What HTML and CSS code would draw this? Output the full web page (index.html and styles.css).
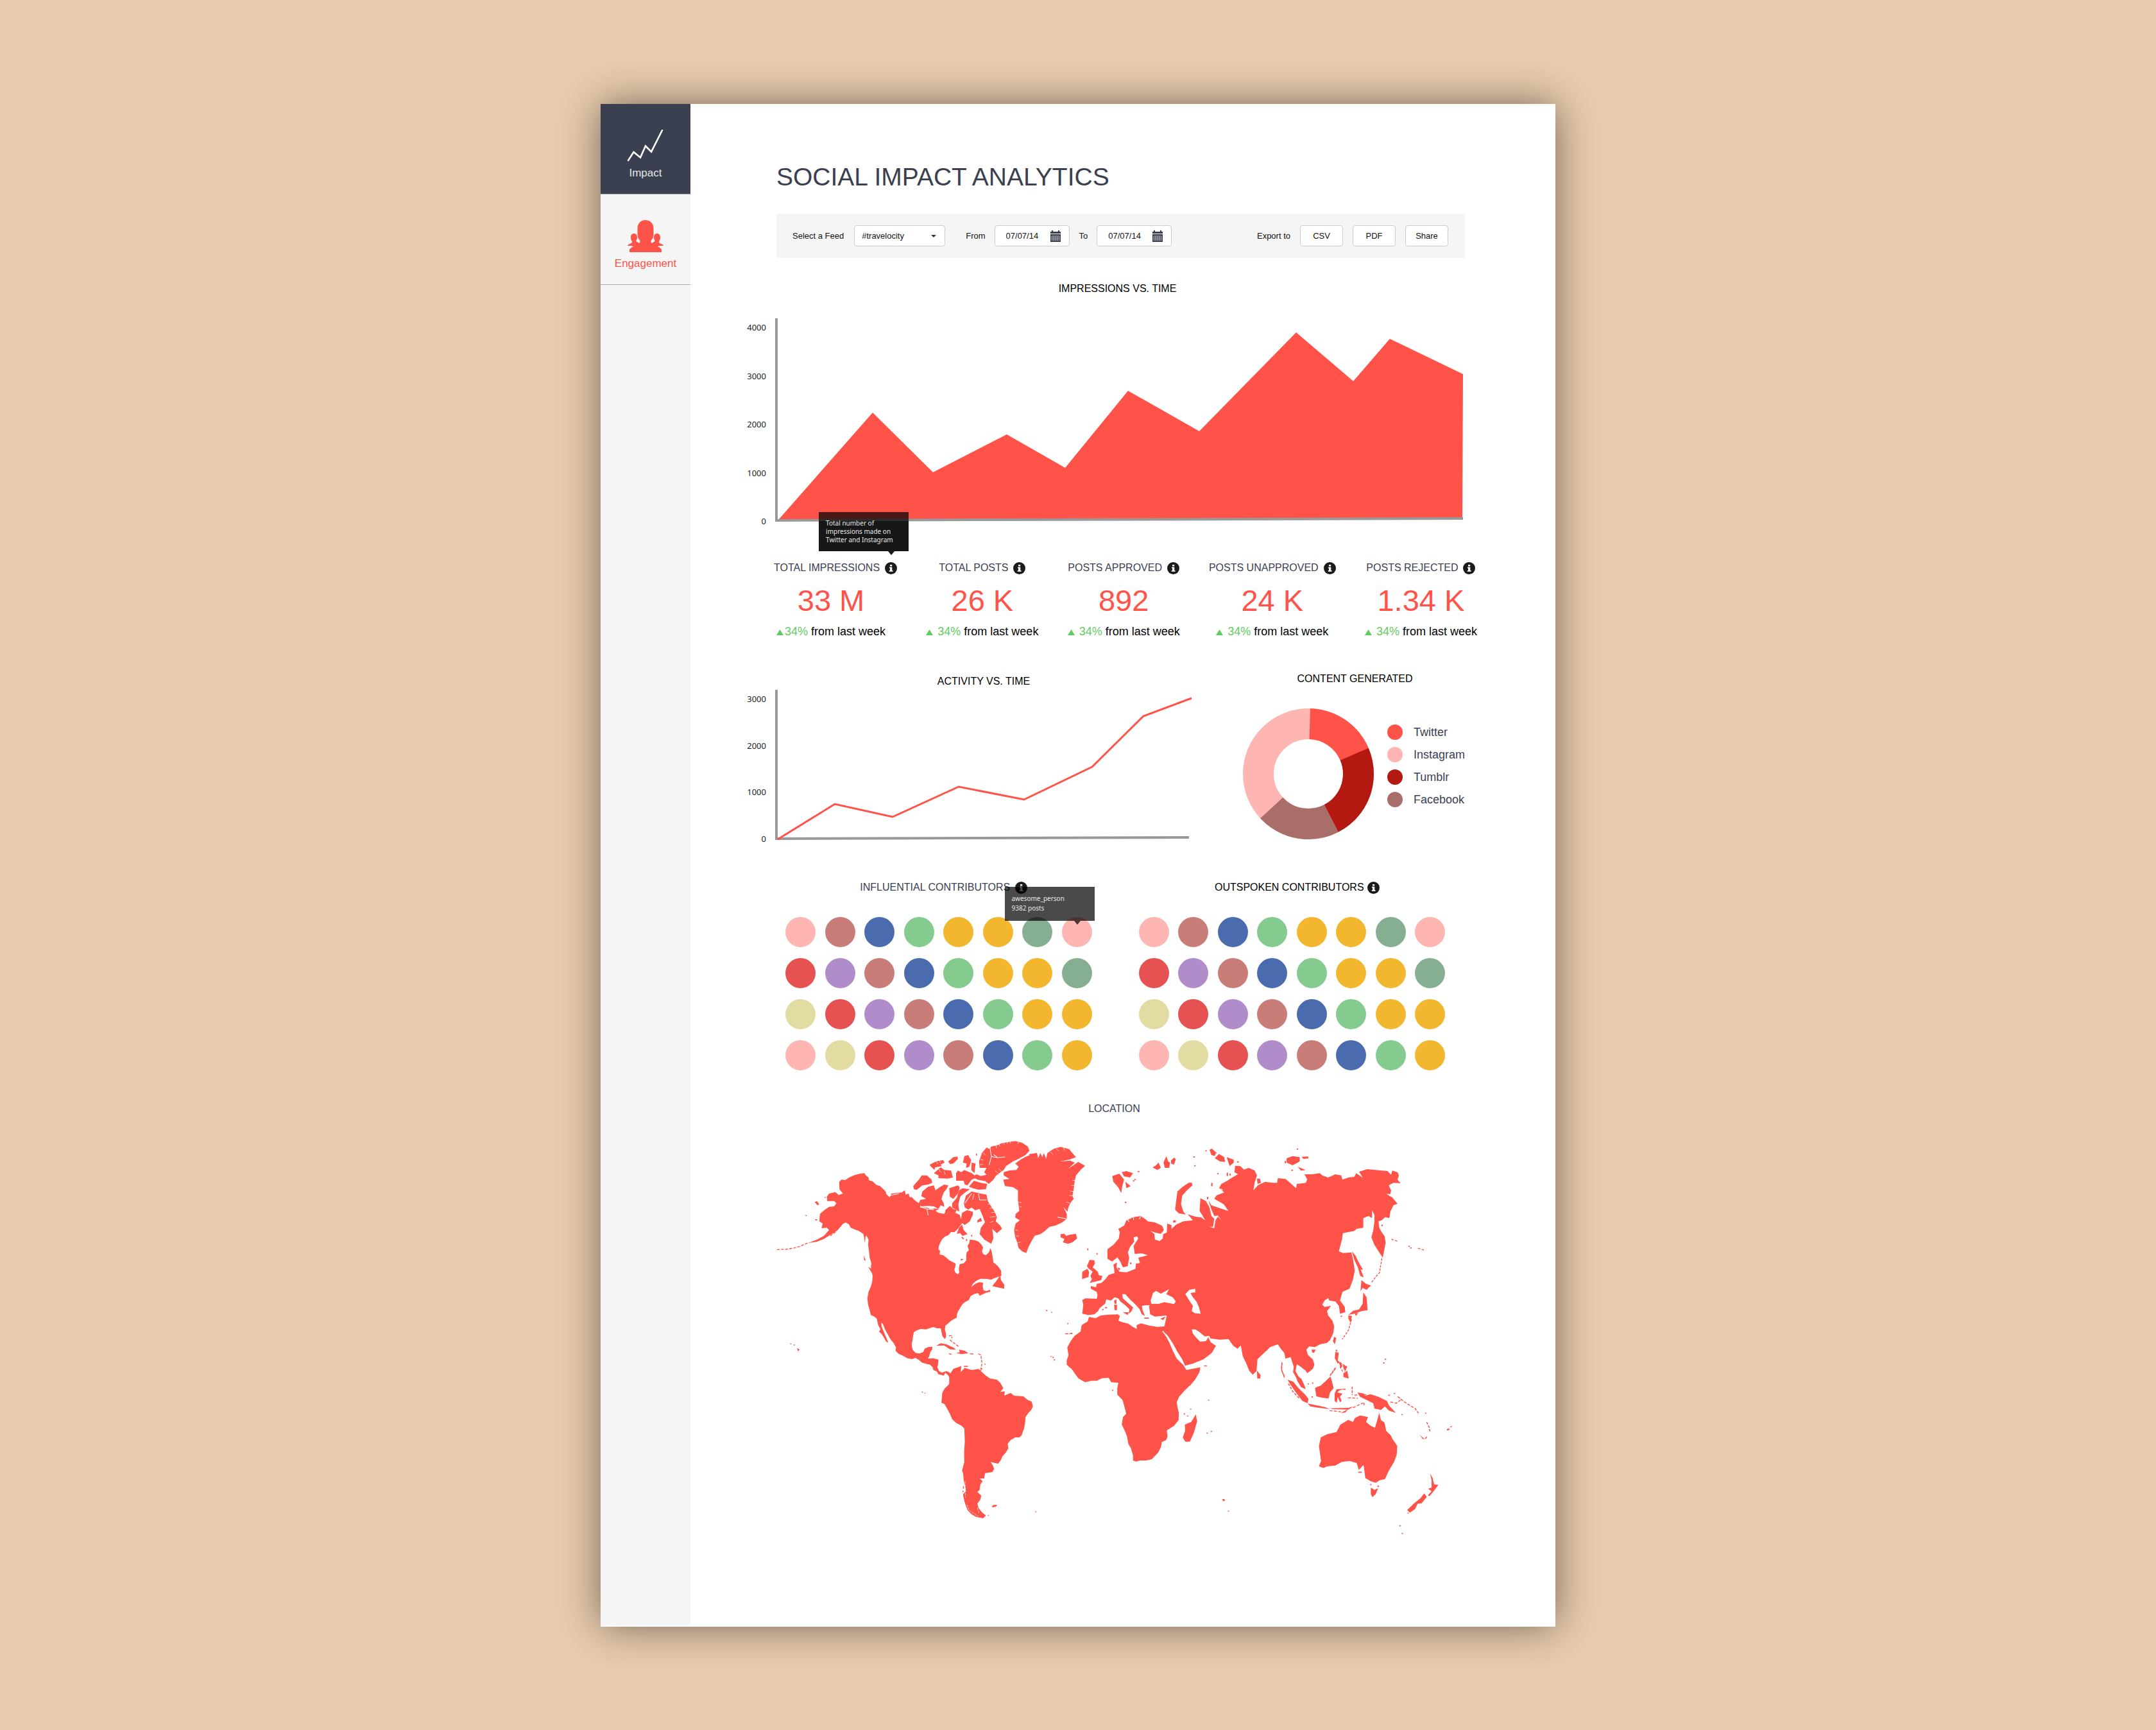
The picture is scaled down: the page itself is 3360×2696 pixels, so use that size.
FILE: index.html
```html
<!DOCTYPE html>
<html lang="en">
<head>
<meta charset="utf-8">
<meta name="viewport" content="width=device-width, initial-scale=1">
<title>Social Impact Analytics</title>
<link rel="stylesheet" href="styles.css">
</head>
<body>
<svg class="sprite" aria-hidden="true">
  <symbol id="info" viewBox="0 0 19 19"><circle cx="9.500" cy="9.500" r="9.500" fill="#1c1a1c"/><path d="M8 4h3.200v2.500H8zM7 7.800h4.300v5.200h1.200v1.700H6.800V13H8V9.500H7z" fill="#fff"/></symbol>
  <symbol id="up" viewBox="0 0 11 9"><path d="M5.500 0 11 9H0z" fill="#5fcc5f"/></symbol>
  <symbol id="calendar" viewBox="0 0 16 18"><path d="M0 2h2V0h2v2h8V0h2v2h2v3H0zM0 6h16v12H0z" fill="#3b4051"/><path d="M2 9h12M2 12h12M2 15h12M2 9v6.500M5 9v6.500M8 9v6.500M11 9v6.500M14 9v6.500" stroke="#c4c6cd" stroke-width=".8" fill="none"/></symbol>
</svg>
<div class="card">
  <nav class="sidebar" aria-label="Sections">
    <a class="tile tile-active" href="#impact">
      <svg width="56" height="50" viewBox="0 0 56 50"><path d="M1 48 9.500 35 20 43.500 28 25.500 37 34.500 54 1" fill="none" stroke="#fff" stroke-width="2.600" stroke-linecap="round"/></svg>
      <span>Impact</span>
    </a>
    <a class="tile" href="#engagement">
      <svg width="56" height="50" viewBox="0 0 56 50"><path fill="#ff5349" d="M28 0c8 0 12.500 6 12.500 13v9c0 5-2 8-4 10v3c1 1 2 1 3 0l3-2v-1c-1-2-1.500-3-1.500-5 0-4 2-6 5-6s5 2 5 6c0 3-1 5-2 6v2c2 2 6 2 7 5h-6l-3 1c3 2 5 3 6 5v4H3v-4c1-2 3-3 6-5l-3-1H0c1-3 5-3 7-5v-2c-1-1-2-3-2-6 0-4 2-6 5-6s5 2 5 6c0 2-.500 3-1.500 5v1l3 2c1 1 2 1 3 0v-3c-2-2-4-5-4-10v-9C15.500 6 20 0 28 0z"/></svg>
      <span>Engagement</span>
    </a>
  </nav>

  <main class="main" id="impact">
    <h1>SOCIAL IMPACT ANALYTICS</h1>

    <form class="filters">
      <label for="feed">Select a Feed</label>
      <span class="select">
        <select id="feed"><option>#travelocity</option></select>
        <svg width="8" height="4" viewBox="0 0 8 4"><path d="M0 0h8L4 4z" fill="#333"/></svg>
      </span>
      <label class="label-from" for="from">From</label>
      <span class="date"><input id="from" type="text" value="07/07/14"><svg width="16" height="18"><use href="#calendar"/></svg></span>
      <label class="label-to" for="to">To</label>
      <span class="date"><input id="to" type="text" value="07/07/14"><svg width="16" height="18"><use href="#calendar"/></svg></span>
      <span class="export">
        <span>Export to</span>
        <button type="button">CSV</button>
        <button type="button">PDF</button>
        <button type="button">Share</button>
      </span>
    </form>

    <section class="chart chart-impressions">
      <h2>IMPRESSIONS VS. TIME</h2>
      <ol class="scale"><li>4000</li><li>3000</li><li>2000</li><li>1000</li><li>0</li></ol>
      <svg viewBox="0 0 1075 320">
        <path d="M6 313 152 147 246 240 361 181 452 233 550 113 661 176 812 22 901 98 958 32 1072 87 1071 313z" fill="#ff5349"/>
        <path d="M2 0V315" stroke="#999" stroke-width="4"/>
        <path d="M0 315 1072 312" stroke="#999" stroke-width="4"/>
      </svg>
    </section>

    <section class="stats">
      <article class="stat stat-lead">
        <h3>TOTAL IMPRESSIONS <span class="hint"><svg width="19" height="19"><use href="#info"/></svg><span class="tip tip-impressions" role="tooltip">Total number of impressions made on Twitter and Instagram</span></span></h3>
        <p class="value">33 M</p>
        <p class="change"><svg width="11" height="9"><use href="#up"/></svg><span><em>34%</em> from last week</span></p>
      </article>
      <article class="stat">
        <h3>TOTAL POSTS <svg width="19" height="19"><use href="#info"/></svg></h3>
        <p class="value">26 K</p>
        <p class="change"><svg width="11" height="9"><use href="#up"/></svg><span><em>34%</em> from last week</span></p>
      </article>
      <article class="stat">
        <h3>POSTS APPROVED <svg width="19" height="19"><use href="#info"/></svg></h3>
        <p class="value">892</p>
        <p class="change"><svg width="11" height="9"><use href="#up"/></svg><span><em>34%</em> from last week</span></p>
      </article>
      <article class="stat">
        <h3>POSTS UNAPPROVED <svg width="19" height="19"><use href="#info"/></svg></h3>
        <p class="value">24 K</p>
        <p class="change"><svg width="11" height="9"><use href="#up"/></svg><span><em>34%</em> from last week</span></p>
      </article>
      <article class="stat">
        <h3>POSTS REJECTED <svg width="19" height="19"><use href="#info"/></svg></h3>
        <p class="value">1.34 K</p>
        <p class="change"><svg width="11" height="9"><use href="#up"/></svg><span><em>34%</em> from last week</span></p>
      </article>
    </section>

    <div class="pair">
      <section class="chart chart-activity">
        <h2>ACTIVITY VS. TIME</h2>
        <ol class="scale"><li>3000</li><li>2000</li><li>1000</li><li>0</li></ol>
        <svg viewBox="0 0 650 236">
          <path d="M2 0V233" stroke="#999" stroke-width="4"/>
          <path d="M0 232 645 230" stroke="#999" stroke-width="4"/>
          <path d="M4 233 93 178 183 198 286 151 388 171 494 120 574 41 649 13" fill="none" stroke="#ff5349" stroke-width="3"/>
        </svg>
      </section>
      <section class="content">
        <h2>CONTENT GENERATED</h2>
        <div class="content-body">
          <svg width="206" height="206" viewBox="-103 -103 206 206">
            <g fill="none" stroke-width="48" transform="rotate(-90)">
              <circle r="78" pathLength="360" stroke="#ffb6b3"/>
              <circle r="78" pathLength="360" stroke="#ff5349" stroke-dasharray="65.500 294.500" stroke-dashoffset="-1.700"/>
              <circle r="78" pathLength="360" stroke="#b31910" stroke-dasharray="86 274" stroke-dashoffset="-66.800"/>
              <circle r="78" pathLength="360" stroke="#aa6e6a" stroke-dasharray="74.500 285.500" stroke-dashoffset="-152.700"/>
            </g>
          </svg>
          <ul class="legend">
            <li><i class="red"></i>Twitter</li>
            <li><i class="pink"></i>Instagram</li>
            <li><i class="crimson"></i>Tumblr</li>
            <li><i class="dust"></i>Facebook</li>
          </ul>
        </div>
      </section>
    </div>

    <div class="contributors">
      <section>
        <h2 class="slate">INFLUENTIAL CONTRIBUTORS <svg width="19" height="19"><use href="#info"/></svg></h2>
        <ul class="people">
          <li class="pink"></li><li class="rose"></li><li class="blue"></li><li class="green"></li><li class="gold"></li><li class="gold"></li><li class="sage"></li><li class="pink hint"><span class="tip tip-person" role="tooltip">awesome_person<br>9382 posts</span></li>
          <li class="coral"></li><li class="violet"></li><li class="rose"></li><li class="blue"></li><li class="green"></li><li class="gold"></li><li class="gold"></li><li class="sage"></li>
          <li class="sand"></li><li class="coral"></li><li class="violet"></li><li class="rose"></li><li class="blue"></li><li class="green"></li><li class="gold"></li><li class="gold"></li>
          <li class="pink"></li><li class="sand"></li><li class="coral"></li><li class="violet"></li><li class="rose"></li><li class="blue"></li><li class="green"></li><li class="gold"></li>
        </ul>
      </section>
      <section>
        <h2>OUTSPOKEN CONTRIBUTORS <svg width="19" height="19"><use href="#info"/></svg></h2>
        <ul class="people">
          <li class="pink"></li><li class="rose"></li><li class="blue"></li><li class="green"></li><li class="gold"></li><li class="gold"></li><li class="sage"></li><li class="pink"></li>
          <li class="coral"></li><li class="violet"></li><li class="rose"></li><li class="blue"></li><li class="green"></li><li class="gold"></li><li class="gold"></li><li class="sage"></li>
          <li class="sand"></li><li class="coral"></li><li class="violet"></li><li class="rose"></li><li class="blue"></li><li class="green"></li><li class="gold"></li><li class="gold"></li>
          <li class="pink"></li><li class="sand"></li><li class="coral"></li><li class="violet"></li><li class="rose"></li><li class="blue"></li><li class="green"></li><li class="gold"></li>
        </ul>
      </section>
    </div>

    <section class="location">
      <h2 class="slate">LOCATION</h2>
      <svg viewBox="0 0 1080 640" fill="#ff5349" role="img" aria-label="World map">
        <!-- North America, Greenland, Iceland, British Isles -->
        <g transform="scale(.35714 .33333)">
          <path d="M412 205 418 215 430 225 432 238 448 243 465 260 480 265 497 282 505 292 508 303 522 318 530 300 550 298 575 295 588 285 592 305 605 300 608 315 620 318 630 330 645 342 658 350 655 362 685 366 700 372 722 370 738 372 722 380 735 390 760 395 772 372 788 360 800 372 815 378 808 390 828 400 832 415 842 435 830 450 820 465 805 480 790 480 778 495 765 500 752 512 745 525 737 545 735 560 742 568 740 585 755 588 770 600 782 612 800 622 810 628 808 645 804 655 808 668 820 678 826 670 824 650 828 630 845 626 857 612 856 590 858 575 868 565 862 545 870 530 872 515 895 518 910 525 922 538 930 552 925 570 930 583 942 588 955 575 962 555 968 575 972 600 975 622 995 640 1008 660 1010 685 1000 688 980 695 965 703 945 699 920 698 900 708 885 722 878 738 895 722 915 714 930 718 928 735 932 752 945 756 960 750 962 758 940 765 915 778 908 765 890 770 875 780 868 798 850 808 838 820 830 835 820 852 815 868 815 880 790 895 775 910 765 918 763 935 768 955 768 972 762 980 752 965 748 945 745 930 730 930 712 924 695 930 680 935 658 933 640 940 628 948 624 965 622 985 618 1005 622 1030 635 1045 652 1048 668 1042 675 1025 690 1018 708 1016 708 1028 700 1040 694 1062 690 1072 712 1070 735 1076 734 1095 730 1112 738 1130 750 1138 768 1130 780 1134 790 1145 780 1152 765 1138 758 1152 750 1148 735 1145 728 1132 713 1125 710 1112 698 1100 680 1096 662 1090 650 1078 635 1068 620 1074 600 1070 580 1058 562 1050 548 1035 550 1020 540 1000 525 980 515 960 502 935 492 908 485 905 488 925 498 950 508 975 517 998 505 990 498 975 488 958 476 945 482 935 472 915 466 885 455 875 440 868 435 845 428 820 425 790 430 760 440 735 446 710 448 685 440 650 442 625 435 600 432 570 428 540 430 515 420 495 414 530 408 490 388 475 370 468 352 460 345 445 330 435 318 442 295 472 265 492 235 512 205 525 165 532 205 515 235 498 258 470 248 460 225 462 230 440 215 430 218 395 240 375 258 362 280 360 290 345 280 335 250 335 248 315 258 300 285 293 300 307 318 300 303 280 302 245 312 235 328 237 345 225 365 215 390 208z"/>
          <path d="M428 642 445 655 462 672 465 690 450 680 438 660zM410 590l8 25-8-5z"/>
          <path d="M625 265 650 235 662 215 685 215 705 235 708 250 690 258 665 262 640 283 628 280zM650 345 655 330 682 325 660 312 665 290 690 268 715 262 722 285 738 272 760 258 778 262 770 280 758 295 748 325 758 345 760 362 745 355 735 372 715 360 690 358 660 360z"/>
          <path d="M697 165 725 150 755 143 762 155 745 165 750 172 720 178 718 190 700 172zM715 205 745 177 760 190 790 192 798 225 775 230 735 228 735 215zM778 150 800 130 818 127 820 138 800 160 785 162zM848 125 865 120 878 145 870 175 855 180 858 160 842 155zM880 155 897 160 892 205 878 190zM812 205 820 192 835 200 848 190 880 205 905 225 880 235 862 262 850 258 845 240 812 240zM868 268 890 240 920 250 948 255 942 280 910 282 885 275zM782 275 820 262 828 270 820 300 800 325 785 315zM825 285 840 275 872 280 845 300 830 315 822 350 826 385 795 365 795 345 815 320zM765 378l20-20 8 15-8 25-20-8z"/>
          <path d="M965 80 990 75 1010 65 1035 60 1070 55 1100 62 1125 80 1132 100 1115 120 1090 135 1060 150 1030 172 1020 190 1000 205 985 218 975 235 955 255 940 242 905 235 885 222 900 210 920 218 945 212 935 200 945 180 915 180 912 150 925 110 945 85 958 92z"/>
          <path d="M846 345 855 310 880 290 920 300 945 305 950 335 965 360 980 385 990 410 985 430 1005 450 1012 465 990 485 970 465 975 510 965 535 935 515 915 490 920 460 938 435 930 410 915 372 895 378 880 365 865 375 850 365zM838 390 860 378 885 385 885 400 872 430 850 447 832 432zM815 488 825 460 838 445 845 470 862 490 840 498 830 485zM905 425l15-12 5 15-20 8zM832 605l12 2-10 8z"/>
          <path d="M970 733 990 705 1005 682 1008 705 1022 725 1022 745 1000 740z"/>
          <path d="M1020 200 1045 192 1075 190 1085 175 1070 160 1095 140 1120 125 1135 115 1165 110 1170 135 1180 110 1188 130 1195 110 1205 138 1210 112 1225 100 1240 90 1270 82 1305 92 1315 105 1335 130 1310 140 1265 150 1310 146 1330 155 1300 185 1345 152 1375 170 1355 190 1335 215 1330 240 1325 280 1320 310 1325 325 1310 345 1302 365 1298 385 1280 362 1295 395 1295 418 1275 435 1245 450 1220 455 1200 475 1180 490 1155 497 1145 515 1130 545 1118 578 1100 570 1085 555 1078 525 1070 505 1065 470 1072 440 1090 425 1070 412 1072 395 1088 380 1082 330 1082 285 1060 270 1025 265 1018 235 1045 232 1020 215z"/>
          <path d="M1268 490 1285 488 1292 498 1310 492 1335 488 1340 510 1320 528 1300 535 1278 528 1285 512 1268 505z"/>
          <path d="M725 1012 745 1000 770 1005 800 1020 812 1030 785 1028 760 1010zM812 1045 828 1042 825 1030 850 1035 865 1046 835 1051zM872 1047l15 1v4l-15-1zM778 1046l18 4-10 4zM118 1022 130 1030 122 1037z"/>
          <path d="M1383 640 1395 610 1415 612 1418 628 1408 645 1430 665 1435 682 1450 685 1445 705 1425 710 1395 718 1405 700 1398 685 1408 665 1390 650zM1363 665 1385 652 1392 665 1390 690 1362 700 1362 680z"/>
          <path d="M250 335 290 320 258 300zM195 340l10-5 10 15-8 5zM196 420h10v5h-8z"/>
          <path fill="none" stroke="#ff5349" stroke-width="4" stroke-linecap="round" stroke-dasharray="9 9" d="M162 532 130 547 108 554 75 560 32 562M285 480 260 500M782 965l12 0 0 10M786 985l18 15 22 18M910 1050l10 5 5 40-5 25M1292 956l16 0 16-5"/>
          <path fill="none" stroke="#ff5349" stroke-width="5" stroke-linecap="round" d="M90 1003h1M105 1008h2M157 403h1M901 116v4M925 1120h-3M938 1098h1M1226 1062h1M1240 1078h1M1206 847h3M1229 855h1M1299 908h1M1387 558v6M1427 580v3M848 1108h14M1551 341h1M240 318h1M858 520v-5M880 495v4M838 505l6 6"/>
          <path fill="none" stroke="#fff" stroke-width="3" d="M960 85l6 42 25 5 35-3M966 127l-10 40M991 130l-15-12M1090 135l42-15M522 310l40-10M945 700l10 15M1255 410l38 8M655 362l30 10 5 30M685 372l30 3M418 500l-2 70M425 520l-2 60M850 345l30-45M945 330l-30 0-5-30"/>
          <path fill="none" stroke="#fff" stroke-width="2" d="M985 74l4 14M1000 68l3 12M1020 60l2 12M1035 58v10M1048 55v10M1085 58l-3 10M930 110l10 10M918 140l12 4M915 165l14-2M995 205l-12-12M1010 195l-12-10M725 150l8 12M740 146l4 12M735 185l10 15M760 195l4 16M890 300l-6 30M905 380l10 20M950 350l16-4M958 370l18-4M965 390l20-3M960 410l24-2M975 430l-14 4M1335 240l-16-2M1330 262l-16 0M1325 290l-16-2M1320 312l-14-4M1308 345l-14-5M1085 340l12 2M1088 362l10 0M1070 470l12 2M1074 500l12-2M1082 530l12-3M1225 105l10 14M1250 90l10 12M1280 84l6 14"/>
        </g>
        <!-- South America -->
        <g transform="translate(0 300) scale(.35714 .33333)">
          <path d="M788 240 800 220 835 206 832 235 850 215 880 225 910 220 925 235 940 250 960 265 990 270 1005 285 1018 310 1005 328 1025 325 1022 345 1050 332 1065 345 1105 348 1125 365 1142 373 1147 395 1140 412 1128 425 1115 445 1113 475 1108 500 1098 530 1088 540 1070 540 1050 553 1037 570 1040 590 1030 610 1015 628 1005 650 995 663 962 655 972 670 978 688 970 702 938 707 935 732 915 732 928 745 918 760 915 785 905 795 922 812 918 830 905 850 910 870 925 890 942 905 930 918 900 912 880 900 862 880 850 845 842 808 855 790 852 770 845 740 843 710 838 695 848 655 847 610 850 560 848 498 835 485 812 472 795 455 785 430 770 400 762 385 748 378 750 355 752 330 762 312 782 290 782 260 775 240z"/>
          <path d="M968 862l8-6 16 0-6 8-14 3zM1155 883l8 4-2 5zM660 325l8 2-2 6z"/>
          <path fill="none" stroke="#ff5349" stroke-width="4" stroke-linecap="round" d="M676 333h1M953 905h1M844 770v8M842 790v5M917 226h4"/>
          <path fill="none" stroke="#fff" stroke-width="2" stroke-dasharray="10 4" d="M851 745l2 75M860 855l8 25 40 28M905 870l8 25"/>
        </g>
        <!-- Eurasia -->
        <g transform="translate(500 0) scale(.3699 .33333)">
          <path d="M-36 797-22 790 25 792 28 775 25 760 0 745 0 733 22 738 25 722 45 718 62 700 75 680 100 672 98 650 95 632 110 622 108 645 120 665 150 668 175 658 188 652 190 628 207 625 200 600 240 588 215 580 185 582 180 545 200 510 195 500 180 505 183 525 165 550 156 575 162 600 155 640 135 645 125 620 112 598 90 618 70 605 70 560 95 540 118 510 122 480 116 465 140 450 150 425 180 410 210 405 230 420 240 430 270 435 300 450 308 470 295 488 270 482 252 475 268 490 270 515 290 522 303 510 305 490 320 482 322 440 340 448 340 465 360 445 390 430 430 425 408 397 440 408 465 412 482 425 458 380 462 322 485 335 500 365 508 405 520 418 515 455 500 455 520 462 525 425 535 408 550 425 535 403 520 405 508 375 495 330 508 355 535 365 580 382 560 350 520 325 530 308 562 295 540 275 550 255 575 240 600 222 620 210 605 200 608 170 630 172 645 188 665 180 690 192 700 215 690 250 685 285 705 260 735 245 765 250 785 250 788 228 820 232 835 245 865 275 868 255 905 250 912 235 900 210 930 210 965 205 975 215 1000 225 1030 210 1055 215 1060 235 1085 225 1110 222 1118 205 1145 225 1130 198 1165 186 1200 190 1250 195 1265 212 1270 193 1292 200 1298 215 1292 235 1305 252 1275 250 1255 262 1265 285 1262 302 1245 302 1270 318 1292 348 1275 355 1262 385 1258 415 1240 410 1225 425 1212 430 1215 460 1225 480 1238 500 1242 530 1235 570 1230 600 1215 575 1195 540 1182 505 1190 470 1195 430 1195 400 1185 378 1185 415 1170 405 1148 415 1148 460 1120 465 1110 475 1062 485 1058 515 1045 570 1062 578 1098 575 1105 610 1112 660 1105 700 1090 745 1060 760 1050 800 1070 830 1072 855 1050 862 1045 825 1030 805 1005 800 1000 788 985 800 975 820 985 830 1012 825 995 850 1000 870 1018 895 1025 920 1022 950 1008 985 995 998 965 1005 945 1018 920 1015 908 1030 915 1055 935 1075 942 1100 935 1120 912 1140 905 1128 885 1110 868 1098 862 1130 875 1155 890 1175 897 1200 880 1195 865 1160 852 1135 855 1110 842 1065 820 1072 815 1045 800 1025 788 1005 755 1018 745 1030 720 1055 702 1075 698 1130 682 1147 668 1130 655 1095 640 1060 632 1010 618 1025 600 1012 580 980 545 983 505 978 498 965 480 968 455 945 440 935 425 935 430 955 445 975 460 992 485 990 495 972 505 995 527 1012 510 1045 475 1075 430 1095 397 1105 385 1075 365 1040 345 1000 325 965 308 948 300 930 310 920 320 870 300 872 270 875 250 865 245 825 250 822 232 822 215 825 218 845 228 872 215 865 205 840 185 815 165 795 145 770 132 770 135 790 155 810 178 832 172 850 160 862 162 840 145 822 125 805 115 790 100 785 85 800 65 795 60 815 38 835 30 850 15 865-12 868-36 862-32 820z"/>
          <path fill="#fff" d="M262 765 275 755 295 768 330 747 318 770 345 785 358 805 350 817 310 808 285 816 255 815 252 800zM398 770 415 750 440 745 440 762 420 765 430 785 445 805 455 830 463 862 440 860 425 850 430 825 415 800z"/>
          <path d="M135 855 160 855 155 868zM98 800l10-5v20h-8zM98 820h12v25h-10zM225 880h20v5h-20zM292 885 315 875 305 892zM112 645l12 5-5 12z"/>
          <path d="M412 250 425 248 428 262 405 285 385 310 380 350 390 385 400 398 370 392 355 375 360 330 365 290 385 270z"/>
          <path d="M90 218 120 207 140 235 132 270 128 298 115 270 95 245zM130 200 150 195 178 205 165 225 140 220zM145 245 168 265 150 275zM260 178 275 168 285 155 295 180 280 190zM306 155 318 125 326 150 334 155 330 180 312 180zM338 145 352 132 358 140 350 165 338 160zM500 95 510 90 530 110 525 125 508 120zM522 135 540 115 562 130 566 152 545 150zM572 130 602 142 602 155 585 172zM825 135 850 125 880 130 880 150 850 168 825 155zM888 128 915 127 918 135 895 138zM872 175 905 190 885 193zM348 425l10 0 0 10-12 0zM700 230l12 0 5 20-15 5z"/>
          <path d="M1100 570 1115 590 1130 625 1147 657 1137 655 1150 692 1135 685 1125 645 1110 610zM1140 705 1160 722 1180 730 1162 750 1145 742 1136 757zM1148 762 1162 785 1166 845 1140 850 1115 860 1085 868 1105 848 1130 842 1145 815zM1085 870 1100 872 1095 905 1085 885zM1112 862l15-4-10 14zM1025 970 1034 975 1028 1005 1020 990zM930 1030l18 0-8 15-8-3zM1030 1040 1045 1045 1040 1080 1050 1090 1040 1095 1028 1070zM1046 1092l10 0 4 18-8 4zM1062 1102l14 4 0 16-10 2zM1064 1140 1080 1128 1087 1165 1064 1158zM700 1128 715 1148 714 1165 701 1165zM478 1104h10v4h-10z"/>
          <path fill="none" stroke="#ff5349" stroke-width="4" stroke-linecap="round" stroke-dasharray="7 9" d="M1226 605 1216 670 1200 690 1180 720M1098 890 1085 940 1060 980M805 1090 803 1120 815 1160M1050 1090 1078 1110 1070 1130M1050 1110 1060 1130M1268 514l26 10M1380 556l22 8M1030 1115l-22 35"/>
          <path fill="none" stroke="#ff5349" stroke-width="6" stroke-linecap="round" d="M870 92h1M485 100h1M434 129h2M438 170h1M618 152h3M535 207h1M575 205v10M510 253v10M492 318v6M847 191h2M146 341h1M200 197h2M186 235h1M180 241h1M1340 547h1M1348 554h1M1234 1092h1M1241 1075h1M1055 874h1M1227 448v2M168 625v3M62 833h4M50 842h1M1035 1033v3M587 210v3M820 150v6"/>
          <path fill="none" stroke="#fff" stroke-width="3" d="M528 112l-5 14M526 290l30-6M530 275l24 6M120 460l12-8M160 432l-5-12M180 424l0-12M205 420l4-14M225 835l15-8M228 850l15 5M232 865l15 0M235 840l12 6"/>
        </g>
        <!-- Africa, South East Asia, Oceania -->
        <g transform="translate(440 260) scale(.40816 .33333)">
          <path d="M140 97 165 103 185 90 215 86 250 85 258 92 252 115 270 122 290 128 305 142 322 153 322 135 338 127 370 137 400 143 428 141 428 155 420 165 435 190 448 220 460 255 475 292 500 322 512 345 540 338 565 332 562 355 545 390 530 412 510 435 485 468 475 495 478 520 483 545 482 580 465 605 437 628 440 655 435 672 418 682 415 705 405 730 380 762 358 768 335 768 320 773 308 768 308 745 300 710 290 690 285 655 275 625 265 600 270 565 282 550 275 515 268 485 248 460 248 430 252 405 225 402 215 382 190 383 170 395 150 395 125 402 100 385 85 360 75 342 55 320 55 300 62 275 57 240 70 210 85 185 108 165 112 135 135 118z"/>
          <path d="M548 553 553 585 540 640 525 680 508 680 498 660 507 630 506 600 530 588zM580 323h10v4h-10zM648 950l6-3 7 7-8 5z"/>
          <path d="M898 390 920 400 940 430 965 460 978 480 975 500 955 490 930 450 910 415zM930 370 950 385 962 415 968 435 950 425 935 395zM975 502 1000 508 1040 518 1060 528 1020 522 985 515zM1060 524 1130 522 1150 515 1130 530 1070 528zM1100 546l30-18-12 16zM1003 428 1025 418 1045 395 1062 375 1068 400 1074 430 1060 450 1055 478 1030 475 1008 468zM1085 435 1118 433 1095 441 1088 450 1108 455 1098 470 1105 490 1098 495 1090 470 1086 498 1078 490 1078 455zM1165 450 1190 455 1195 465 1215 458 1245 470 1278 490 1285 510 1300 530 1312 545 1285 535 1270 515 1255 532 1230 525 1225 500 1200 485 1175 470z"/>
          <path d="M1248 545 1255 580 1268 590 1275 630 1292 650 1300 670 1317 700 1315 740 1305 775 1285 815 1270 855 1250 860 1235 872 1215 865 1195 850 1192 820 1188 790 1170 812 1162 780 1135 770 1105 775 1080 792 1050 795 1035 803 1018 795 1026 770 1018 700 1025 660 1050 645 1085 635 1100 600 1130 578 1148 588 1155 570 1175 557 1205 565 1198 588 1215 605 1232 615 1238 590zM1216 895 1230 905 1244 898 1235 925 1222 940 1216 925z"/>
          <path d="M1442 828 1452 850 1458 880 1474 882 1460 905 1440 935 1434 930 1448 912 1435 900 1448 895 1448 860zM1420 922 1430 938 1410 968 1395 970 1385 995 1365 1012 1355 1000 1380 970 1405 945zM1403 648l20 22-10-4zM1505 623l8-6 5 7-10 4zM1518 610l10-4-6 8z"/>
          <path fill="none" stroke="#ff5349" stroke-width="4" stroke-linecap="round" stroke-dasharray="8 9" d="M902 410 918 445 945 480M877 315 875 345 888 380M1080 340 1062 370M1145 425v35M1130 475l35 2M1155 462l50-2M1150 520l35-20M1292 495l22 5 16-15M1320 470l25 25 40 30 12 20M1430 590l8 20 5 28M1190 500v10M1060 535l40 5M1425 665l8-12M50 175h30"/>
          <path fill="none" stroke="#ff5349" stroke-width="5" stroke-linecap="round" d="M596 486h1M528 528h1M504 549v2M516 560h1M591 640h1M607 632h1M672 1005h1M1327 1073h1M1336 1109h1M1425 547h1M994 405v2M977 410h1M1285 463h2M1306 455h1M1335 553h1M1216 880v2M1244 887v3M1170 823h10M230 440h1M3 285v2M8 298h1M992 470v2M1358 1014h1M1112 435h6"/>
          <path fill="none" stroke="#fff" stroke-width="2" d="M1186 792l-10 25M1190 800l-8 20"/>
        </g>
      </svg>
    </section>
  </main>
</div>
</body>
</html>
```
FILE: styles.css
```css
* { box-sizing: border-box; margin: 0; padding: 0; }

body {
  min-height: 100vh;
  padding: 162px 24px;
  background: #e9ccaf;
  color: #111;
  font: 16px/20px "Liberation Sans", Arial, sans-serif;
}

ul, ol { list-style: none; }
svg { display: block; flex: none; }
.sprite { position: absolute; width: 0; height: 0; }

.card {
  display: flex;
  max-width: 1488px;
  margin: 0 auto;
  padding-bottom: 2px;
  background: #fff;
  box-shadow: 0 0 60px rgba(0, 0, 0, .5);
}

/* Sidebar */
.sidebar { flex: none; width: 140px; background: #f5f5f5; }
.tile {
  display: flex;
  flex-direction: column;
  align-items: center;
  gap: 8px;
  height: 141px;
  padding-top: 40px;
  border-bottom: 1px solid #aaa;
  color: #ff5349;
  font-size: 17px;
  text-decoration: none;
}
.tile-active { background: #3b4051; color: #e4e5e8; }

/* Main column */
.main { flex: 1; min-width: 0; padding: 92px 141px 133px 134px; }
h1 { color: #3b4051; font-size: 39px; line-height: 44px; font-weight: 400; }
h2, h3 {
  display: flex;
  justify-content: center;
  align-items: center;
  gap: 5px;
  font-size: 16px;
  line-height: 20px;
  font-weight: 400;
}
h2 { color: #000; }
h3, h2.slate { gap: 8px; color: #3b4051; }

/* Filter bar */
.filters {
  display: flex;
  align-items: center;
  margin-top: 35px;
  padding: 18px 26px 18px 25px;
  background: #f5f5f5;
  font-size: 13px;
}
.select { display: grid; align-items: center; width: 142px; margin-left: 16px; }
.select > * { grid-area: 1 / 1; }
.select svg { justify-self: end; margin-right: 14px; pointer-events: none; }
select, input, button { color: #111; font: inherit; }
select, .date, button {
  height: 33px;
  background: #fff;
  border: 1px solid #ccc;
  border-radius: 4px;
}
select { width: 100%; padding: 0 11px; appearance: none; }
.label-from { margin-left: 32px; }
.label-to { margin-left: 15px; }
.date {
  display: flex;
  align-items: center;
  justify-content: space-between;
  width: 117px;
  margin-left: 14px;
  padding: 0 13px 0 17px;
}
.date input { width: 60px; border: 0; background: none; }
.export { display: flex; align-items: center; gap: 15px; margin-left: auto; }
button { width: 67px; }

/* Charts */
.chart {
  display: grid;
  grid-template-columns: 38px 1fr;
  column-gap: 14px;
  margin-left: -54px;
}
.chart h2 { grid-column: 2; }
.chart svg { width: 100%; height: auto; }
.chart-impressions { row-gap: 36px; margin-top: 38px; }
.chart-impressions h2 { padding-right: 8px; }
.scale {
  display: flex;
  flex-direction: column;
  justify-content: space-between;
  margin-bottom: -4px;
  padding-top: 6px;
  color: #222;
  font: 13px/16px "Noto Sans", sans-serif;
  text-align: right;
}

/* Key figures */
.stats { display: flex; justify-content: space-between; margin: 59px -19px 0 -4px; }
.value { margin-top: 16px; color: #ff5349; font-size: 47px; line-height: 50px; text-align: center; }
.change {
  display: flex;
  justify-content: center;
  align-items: baseline;
  gap: 7px;
  margin-top: 12px;
  color: #000;
  font-size: 18px;
  line-height: 22px;
}
.change em { color: #5fcc5f; font-style: normal; }
.stat-lead .value { padding-right: 14px; }
.stat-lead .change { justify-content: flex-start; gap: 2px; padding-left: 4px; }

/* Tooltips */
.hint { position: relative; }
.tip {
  position: absolute;
  width: 140px;
  padding-left: 11px;
  color: #e8e8e8;
  font: 10px/13px "Noto Sans", sans-serif;
  text-align: left;
}
.tip::after {
  content: "";
  position: absolute;
  top: 100%;
  right: 22px;
  border: solid transparent;
  border-width: 6px 5px 0;
  border-top-color: inherit;
}
.tip-impressions {
  right: -18px;
  bottom: 36px;
  height: 61px;
  padding-top: 11px;
  padding-right: 8px;
  border-color: #171717;
  background: linear-gradient(rgba(0, 0, 0, .71) 14px, rgba(0, 0, 0, .91) 14px);
}
.tip-person {
  top: -47px;
  right: -4px;
  height: 53px;
  padding-top: 11px;
  border-color: rgba(0, 0, 0, .7);
  background: rgba(0, 0, 0, .71);
  line-height: 15px;
}

/* Activity and content mix */
.pair { display: grid; grid-template-columns: 1fr 347px; column-gap: 78px; margin-top: 53px; }
.chart-activity { row-gap: 3px; padding-top: 4px; align-content: start; }
.content h2 { padding-left: 4px; }
.content-body { display: flex; gap: 20px; margin-top: 35px; }
.legend { display: grid; gap: 11px; align-content: start; padding-top: 26px; }
.legend li { display: flex; align-items: center; gap: 17px; color: #3b4051; font-size: 18px; line-height: 24px; }
.legend i { width: 24px; height: 24px; border-radius: 50%; }

/* Contributors */
.contributors {
  display: grid;
  grid-template-columns: 1fr 1fr;
  column-gap: 73px;
  margin-top: 62px;
  padding: 0 31px 0 14px;
}
.contributors h2 { padding-left: 16px; }
.people {
  display: grid;
  grid-template-columns: repeat(8, 47px);
  justify-content: space-between;
  row-gap: 17px;
  margin-top: 36px;
}
.people li { height: 47px; border-radius: 50%; }
.red { background: #ff5349; }
.pink { background: #ffb6b3; }
.crimson { background: #b31910; }
.dust { background: #aa6e6a; }
.rose { background: #c97d78; }
.blue { background: #4b6baf; }
.green { background: #85cb90; }
.gold { background: #f2b72e; }
.sage { background: #86ae90; }
.coral { background: #e65252; }
.violet { background: #b08ccb; }
.sand { background: #e2dca3; }

/* Map */
.location { margin-top: 50px; }
.location h2 { padding-right: 20px; }
.location svg { width: calc(100% + 7px); height: auto; margin: 22px 0 0 -10px; }
```
